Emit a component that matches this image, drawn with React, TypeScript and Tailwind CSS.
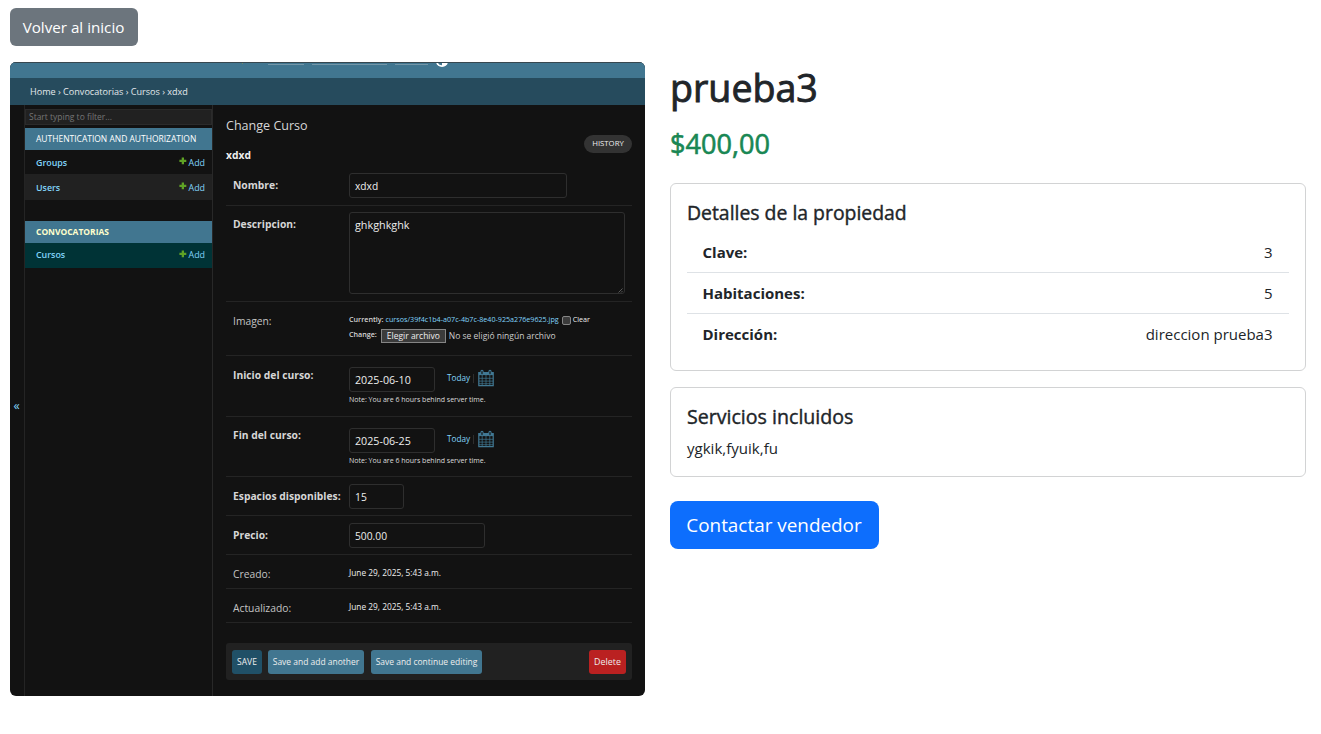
import React from "react";

function Plus() {
  return (
    <svg viewBox="0 0 8 8" className="mr-[2px] h-[8px] w-[8px] -translate-y-px" fill="#5fa225">
      <path d="M2.7 0.4h2.3v2.3h2.3v2.3h-2.3v2.3h-2.3v-2.3h-2.3v-2.3h2.3z" />
    </svg>
  );
}

function CalendarIcon() {
  return (
    <svg viewBox="0 0 16 18" className="h-[18px] w-[16px]" fill="none" stroke="#417893">
      <path d="M0.8 3.5h14.4v13.2h-14.4z" strokeWidth="1.2" />
      <path d="M0.8 4.6h14.4" strokeWidth="3" />
      <path d="M4.2 6v11M8 6v11M11.8 6v11M1 9.3h14M1 12.1h14M1 14.7h14" strokeWidth="0.7" />
      <path d="M4 4.6v-2.2M12 4.6v-2.2" strokeWidth="3.2" strokeLinecap="round" />
      <path d="M4 4.6v-2M12 4.6v-2" strokeWidth="1.2" stroke="#121212" strokeLinecap="round" />
    </svg>
  );
}

function NavRow({ name, className }: { name: string; className: string }) {
  return (
    <div className={"flex items-center pr-[7px] pl-[11px] text-[8.9px] text-[#81d4fa] " + className}>
      <span className="font-semibold">{name}</span>
      <span className="ml-auto flex items-center">
        <Plus />
        Add
      </span>
    </div>
  );
}

function Row({
  label,
  plain,
  className,
  labelClass,
  children,
}: {
  label: string;
  plain?: boolean;
  className: string;
  labelClass: string;
  children: React.ReactNode;
}) {
  return (
    <div className={"flex border-b border-[#242424] pl-[7px] " + className}>
      <div
        className={
          "w-[116px] shrink-0 text-[10.3px] leading-[14px] whitespace-nowrap " +
          (plain ? "text-[#c4c4c4] " : "font-bold text-[#d6d6d6] ") +
          labelClass
        }
      >
        {label}
      </div>
      {children}
    </div>
  );
}

const field = "flex items-center rounded-[3px] border border-[#2e2e2e] pl-[5px] leading-[14px] text-[#eeeeee] ";

function DateField({ value }: { value: string }) {
  return (
    <div className="pt-[11px]">
      <div className="flex h-[25px]">
        <div className={field + "w-[86px] text-[10.7px]"}>{value}</div>
        <span className="ml-[12px] pt-[5px] text-[8.2px] leading-[12px] text-[#81d4fa]">Today</span>
        <span className="mt-[7px] ml-[3px] h-[9px] w-px bg-[#2e2e2e]" />
        <span className="ml-[4px] pt-[2px]">
          <CalendarIcon />
        </span>
      </div>
      <p className="mt-px text-[7.03px] leading-[12px] text-[#dddddd]">Note: You are 6 hours behind server time.</p>
    </div>
  );
}

function AdminPreview() {
  return (
    <div className="flex h-[634px] w-[635px] shrink-0 flex-col overflow-hidden rounded-[6px] bg-[#121212] text-[#eeeeee]">
      <div className="flex h-[16px] items-start border-t border-[#37474f] bg-[#417690] pl-[232px]">
        <span className="h-px w-px bg-[#6f8a6a]" />
        <span className="mt-px ml-[25px] h-px w-[36px] bg-[#7396a8]" />
        <span className="mt-px ml-[8px] h-px w-[75px] bg-[#7396a8]" />
        <span className="mt-px ml-[8px] h-px w-[33px] bg-[#7396a8]" />
        <svg viewBox="0 0 12 4" className="ml-[8px] h-[4px] w-[12px]">
          <path d="M0 -1.5a6 5.4 0 0 0 12 0z" fill="#ffffff" />
          <path d="M6 -1h4.3a4.3 4 0 0 1-4.3 3.2z" transform="matrix(-1 0 0 1 12 0)" fill="#417690" />
        </svg>
      </div>
      <div className="flex h-[27px] shrink-0 items-center bg-[#264b5d] pt-px pl-[20px] text-[9.08px] text-[#e2e8eb]">
        Home › Convocatorias › Cursos › xdxd
      </div>
      <div className="flex min-h-0 flex-1">
        <div className="flex w-[15px] items-center border-r border-[#242424] pt-[12px] pl-[3.5px] text-[12.5px] text-[#81d4fa]">
          «
        </div>
        <nav className="w-[188px] border-r border-[#282828] pt-[4px]">
          <div className="flex h-[16px] items-center border border-[#2b2b2b] bg-[#212121] pt-px pl-[3px] text-[8.47px] text-[#757575]">
            Start typing to filter...
          </div>
          <div className="mt-[3px] flex h-[22px] items-center bg-[#417690] pt-px pl-[11px] text-[8.48px] whitespace-nowrap text-white">
            AUTHENTICATION AND AUTHORIZATION
          </div>
          <NavRow name="Groups" className="h-[24px] pt-px" />
          <NavRow name="Users" className="h-[26px] bg-[#212121] pt-px" />
          <div className="mt-[21px] flex h-[22px] items-center bg-[#417690] pl-[11px] text-[8.46px] font-bold text-[#ffffcc]">
            CONVOCATORIAS
          </div>
          <NavRow name="Cursos" className="h-[25px] bg-[#003336] pb-px" />
        </nav>
        <div className="flex-1 pr-[13px] pl-[13px]">
          <div className="flex h-[62px] justify-between pt-[11px]">
            <div>
              <h2 className="pt-px text-[12.55px] leading-[18px] text-[#d6d6d6]">Change Curso</h2>
              <p className="mt-[13px] text-[10.3px] leading-[14px] font-bold">xdxd</p>
            </div>
            <span className="mt-[19px] flex h-[18px] w-[48px] items-center justify-center rounded-full bg-[#333333] text-[7.74px]">
              HISTORY
            </span>
          </div>
          <Row label="Nombre:" className="h-[39px]" labelClass="pt-[11px]">
            <div className={field + "mt-[6px] h-[25px] w-[218px] text-[10.2px]"}>xdxd</div>
          </Row>
          <Row label="Descripcion:" className="h-[96px]" labelClass="pt-[11px]">
            <div className="mt-[6px] flex h-[82px] w-[276px] justify-between rounded-[3px] border border-[#2e2e2e] pt-[5px] pl-[5px] text-[10.8px] leading-[14px]">
              ghkghkghk
              <svg viewBox="0 0 6 6" className="h-[6px] w-[6px] self-end" stroke="#8a8a8a" strokeWidth="0.6">
                <path d="M0.5 5.5l4-4M3 5.5l1.5-1.5" />
              </svg>
            </div>
          </Row>
          <Row label="Imagen:" plain className="h-[54px]" labelClass="pt-[12px]">
            <div className="pt-[11px] text-[7.17px] leading-[12px] whitespace-nowrap">
              <div className="flex items-center">
                <span className="font-semibold text-[#d6d6d6]">Currently:</span>
                <span className="ml-[2px] text-[#81d4fa]">cursos/39f4c1b4-a07c-4b7c-8e40-925a276e9625.jpg</span>
                <span className="mt-[2px] ml-[3px] h-[9px] w-[9px] rounded-[2px] border border-[#858585] bg-[#3b3b3b]" />
                <span className="ml-[2px]">Clear</span>
              </div>
              <div className="mt-[3px] flex">
                <span className="font-semibold text-[#d6d6d6]">Change:</span>
                <span className="mt-px ml-[4px] flex h-[14px] w-[65px] items-center justify-center border border-[#858585] bg-[#3b3b3b] text-[8.49px]">
                  Elegir archivo
                </span>
                <span className="ml-[3px] pt-px text-[8.5px] leading-[14px] text-[#cccccc]">No se eligió ningún archivo</span>
              </div>
            </div>
          </Row>
          <Row label="Inicio del curso:" className="h-[61px]" labelClass="pt-[12px]">
            <DateField value="2025-06-10" />
          </Row>
          <Row label="Fin del curso:" className="h-[60px]" labelClass="pt-[11px]">
            <DateField value="2025-06-25" />
          </Row>
          <Row label="Espacios disponibles:" className="h-[39px]" labelClass="pt-[12px]">
            <div className={field + "mt-[7px] h-[25px] w-[55px] pt-px text-[10.3px]"}>15</div>
          </Row>
          <Row label="Precio:" className="h-[39px]" labelClass="pt-[12px]">
            <div className={field + "mt-[7px] h-[25px] w-[136px] text-[10.25px]"}>500.00</div>
          </Row>
          <Row label="Creado:" plain className="h-[34px]" labelClass="pt-[12px]">
            <span className="pt-[11px] text-[8.34px] leading-[14px]">June 29, 2025, 5:43 a.m.</span>
          </Row>
          <Row label="Actualizado:" plain className="h-[34px]" labelClass="pt-[12px]">
            <span className="pt-[11px] text-[8.34px] leading-[14px]">June 29, 2025, 5:43 a.m.</span>
          </Row>
          <div className="mt-[20px] flex h-[37px] items-center rounded-[3px] bg-[#212121] px-[6px] text-[8.48px] whitespace-nowrap">
            <span className="flex h-[24px] w-[30px] items-center justify-center rounded-[3px] bg-[#205067] pt-px">SAVE</span>
            <span className="ml-[6px] flex h-[24px] w-[96px] items-center justify-center rounded-[3px] bg-[#417690] pt-px">
              Save and add another
            </span>
            <span className="ml-[7px] flex h-[24px] w-[111px] items-center justify-center rounded-[3px] bg-[#417690] pt-px">
              Save and continue editing
            </span>
            <span className="ml-auto flex h-[24px] w-[37px] items-center justify-center rounded-[3px] bg-[#ba2121] text-[8.9px]">
              Delete
            </span>
          </div>
        </div>
      </div>
    </div>
  );
}

function Detail({ label, value, last }: { label: string; value: string; last?: boolean }) {
  return (
    <li
      className={
        "flex justify-between py-2 pr-[16.5px] pl-[15.5px] text-[15px] leading-[24px] " +
        (last ? "" : "border-b border-[#dee2e6]")
      }
    >
      <strong className="font-bold">{label}</strong>
      <span>{value}</span>
    </li>
  );
}

export default function App() {
  return (
    <main className="h-[734px] overflow-hidden bg-white px-[10px] pt-[8px] font-['Open_Sans','Noto_Sans',sans-serif] text-[#212529]">
      <button className="flex h-[38px] w-[128px] items-center justify-center rounded-[6px] bg-[#6c757d] pr-px text-[15.2px] text-white">
        Volver al inicio
      </button>
      <div className="mt-[16px] flex gap-[25px]">
        <AdminPreview />
        <section className="w-[636px]">
          <h1 className="pt-[3px] text-[37.6px] leading-[46px] font-medium [-webkit-text-stroke:0.9px_#212529]">prueba3</h1>
          <p className="pt-[16px] text-[27.1px] leading-[34px] font-medium text-[#198754] [-webkit-text-stroke:0.6px_#198754]">
            $400,00
          </p>
          <div className="mt-[22px] rounded-[6px] border border-[#d2d3d4] p-4">
            <h2 className="mb-[7px] pt-px text-[19.4px] leading-[24px] font-medium [-webkit-text-stroke:0.4px_#212529]">
              Detalles de la propiedad
            </h2>
            <ul>
              <Detail label="Clave:" value="3" />
              <Detail label="Habitaciones:" value="5" />
              <Detail label="Dirección:" value="direccion prueba3" last />
            </ul>
          </div>
          <div className="mt-4 rounded-[6px] border border-[#d2d3d4] p-4">
            <h2 className="mb-[7px] pt-px text-[19.6px] leading-[24px] font-medium [-webkit-text-stroke:0.4px_#212529]">
              Servicios incluidos
            </h2>
            <p className="text-[15.05px] leading-[24px]">ygkik,fyuik,fu</p>
          </div>
          <button className="mt-6 flex h-[48px] w-[209px] items-center justify-center rounded-[8px] bg-[#0d6efd] pt-px pr-px text-[18.9px] text-white">
            Contactar vendedor
          </button>
        </section>
      </div>
    </main>
  );
}
